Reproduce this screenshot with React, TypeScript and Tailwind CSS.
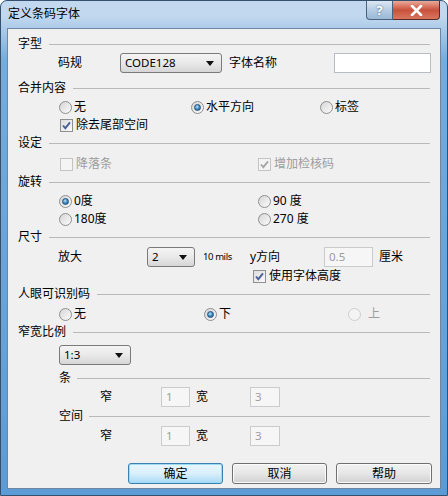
import React, { FC, ReactNode } from 'react';

const Header: FC<{ label: string; mt?: string; sub?: boolean }> = ({ label, mt = '', sub }) => (
  <div className={`flex h-[18px] items-center pr-[10px] ${sub ? 'pl-[51px]' : 'pl-[10px]'} ${mt}`}>
    <span>{label}</span>
    <div className={`h-px flex-1 bg-[#b9b9b9] ${sub ? 'ml-[6px]' : 'ml-[7px]'}`} />
  </div>
);

const Radio: FC<{ label: string; checked?: boolean; disabled?: boolean; width?: string; gap?: string }> = ({
  label,
  checked,
  disabled,
  width = '',
  gap = 'ml-[2px]',
}) => (
  <div className={`flex items-center ${width}`}>
    <span
      className={`flex h-[13px] w-[13px] items-center justify-center rounded-full border ${
        disabled
          ? 'border-[#cfcfcf] bg-[#f4f4f4]'
          : 'border-[#8f8f8f] bg-gradient-to-br from-[#d6d6d6] to-[#fbfbfb]'
      }`}
    >
      {checked && (
        <span className="h-[7px] w-[7px] rounded-full border border-[#1f4f78] bg-[radial-gradient(circle_at_40%_35%,#b6e2fb,#3a86c0_55%,#1d5687)]" />
      )}
    </span>
    <span className={`${gap} ${disabled ? 'text-[#9d9d9d]' : ''}`}>{label}</span>
  </div>
);

const Check: FC<{ label: string; checked?: boolean; disabled?: boolean; width?: string }> = ({
  label,
  checked,
  disabled,
  width = '',
}) => (
  <div className={`flex items-center ${width}`}>
    <span
      className={`flex h-[13px] w-[13px] items-center justify-center border ${
        disabled
          ? 'border-[#c4c4c4] bg-[#f4f4f4]'
          : 'border-[#8f8f8f] bg-gradient-to-br from-[#dcdcdc] to-[#fbfbfb]'
      }`}
    >
      {checked && (
        <svg width="11" height="11" viewBox="0 0 11 11">
          <path
            d="M2 5.5 L4.3 8.2 L9 2.3"
            fill="none"
            stroke={disabled ? '#a8a8a8' : '#4b5f96'}
            strokeWidth="1.9"
          />
        </svg>
      )}
    </span>
    <span className={`ml-[3px] ${disabled ? 'text-[#9d9d9d]' : ''}`}>{label}</span>
  </div>
);

const Combo: FC<{ value: string; width: string }> = ({ value, width }) => (
  <div
    className={`flex h-[20px] items-center justify-between rounded-[3px] border border-[#7a7a7a] bg-gradient-to-b from-[#f4f4f4] via-[#e9e9e9] to-[#d6d6d6] pl-[4px] pr-[7px] text-[11.5px] ${width}`}
  >
    <span>{value}</span>
    <svg width="8" height="5" viewBox="0 0 8 5">
      <path d="M0 0 H8 L4 5 Z" fill="#111" />
    </svg>
  </div>
);

const Field: FC<{ value?: string; width: string; disabled?: boolean }> = ({ value = '', width, disabled }) => (
  <div
    className={`flex h-[20px] items-center border pl-[4px] text-[11.5px] ${width} ${
      disabled ? 'border-[#cbcbcb] bg-[#f6f6f6] text-[#9d9d9d]' : 'border-[#b8bcc4] bg-white'
    }`}
  >
    {value}
  </div>
);

const Button: FC<{ children: ReactNode; primary?: boolean; width: string }> = ({ children, primary, width }) => (
  <div
    className={`flex h-[21px] items-center justify-center rounded-[3px] border ${width} ${
      primary
        ? 'border-[#3c7fb1] bg-gradient-to-b from-[#eaf6fd] via-[#d9f0fc] to-[#a7d9f5] shadow-[inset_0_0_0_1px_#9fdaf7]'
        : 'border-[#707070] bg-gradient-to-b from-[#f2f2f2] via-[#e6e6e6] to-[#d0d0d0] shadow-[inset_0_0_0_1px_#fbfbfb]'
    }`}
  >
    {children}
  </div>
);

const App: FC = () => {
  return (
    <div className="flex h-[496px] w-[448px] flex-col rounded-t-[7px] border border-[#34506e] bg-gradient-to-b from-[#c2d8ee] from-[3%] via-[#74acdd] via-[12%] to-[#5b9cd6] font-['Noto_Sans','Noto_Sans_CJK_SC',sans-serif] text-[12px] leading-[14px] text-black">
      <div className="flex h-[27px] items-start justify-between pr-[7px]">
        <span className="ml-[7px] mt-[6px]">定义条码字体</span>
        <div className="flex">
          <div className="flex h-[19px] w-[27px] items-center justify-center rounded-bl-[4px] border border-t-0 border-[#4a627e] bg-gradient-to-b from-[#dbe7f3] via-[#b6cde4] to-[#9ab8d6] text-[13px] font-bold text-white [text-shadow:0_0_2px_#33506e]">
            ?
          </div>
          <div className="flex h-[19px] w-[47px] items-center justify-center rounded-br-[4px] border border-l-0 border-t-0 border-[#5a2a25] bg-gradient-to-b from-[#e9a999] via-[#c9503b] to-[#d8765f]">
            <svg width="13" height="11" viewBox="0 0 13 11">
              <path d="M2 1 L11 10 M11 1 L2 10" stroke="#fff" strokeWidth="2.6" strokeLinecap="round" />
            </svg>
          </div>
        </div>
      </div>

      <div className="mx-[6px] mb-[6px] flex flex-1 flex-col border border-[#6e86a0] bg-[#f0f0f0] pt-[6px]">
        <Header label="字型" />
        <div className="mt-[1px] flex h-[18px] items-center pl-[50px] pr-[9px]">
          <span className="w-[62px]">码规</span>
          <Combo value="CODE128" width="w-[102px]" />
          <span className="ml-[7px]">字体名称</span>
          <div className="ml-auto">
            <Field width="w-[97px]" />
          </div>
        </div>

        <Header label="合并内容" mt="mt-[7px]" />
        <div className="mt-[1px] flex h-[18px] items-center pl-[51px]">
          <Radio label="无" width="w-[132px]" />
          <Radio label="水平方向" checked width="w-[129px]" />
          <Radio label="标签" />
        </div>
        <div className="flex h-[18px] items-center pl-[52px]">
          <Check label="除去尾部空间" checked />
        </div>

        <Header label="设定" />
        <div className="mt-[3px] flex h-[18px] items-center pl-[52px]">
          <Check label="降落条" disabled width="w-[198px]" />
          <Check label="增加检核码" checked disabled />
        </div>

        <Header label="旋转" />
        <div className="mt-[1px] flex h-[18px] items-center pl-[51px]">
          <Radio label="0度" checked width="w-[199px]" />
          <Radio label="90 度" />
        </div>
        <div className="flex h-[18px] items-center pl-[51px]">
          <Radio label="180度" width="w-[199px]" />
          <Radio label="270 度" />
        </div>

        <Header label="尺寸" />
        <div className="mt-[2px] flex h-[18px] items-center pl-[50px]">
          <span className="w-[89px]">放大</span>
          <Combo value="2" width="w-[48px]" />
          <span className="ml-[8px] w-[47px] text-[9.5px] tracking-[-0.4px]">10 mils</span>
          <span className="w-[74px]">y方向</span>
          <Field value="0.5" width="w-[49px]" disabled />
          <span className="ml-[6px]">厘米</span>
        </div>
        <div className="mt-[1px] flex h-[18px] items-center pl-[245px]">
          <Check label="使用字体高度" checked />
        </div>

        <Header label="人眼可识别码" />
        <div className="mt-[2px] flex h-[18px] items-center pl-[51px]">
          <Radio label="无" width="w-[145px]" />
          <Radio label="下" checked width="w-[144px]" />
          <Radio label="上" disabled gap="ml-[7px]" />
        </div>

        <Header label="窄宽比例" />
        <div className="mt-[5px] flex h-[18px] items-center pl-[51px]">
          <Combo value="1:3" width="w-[72px]" />
        </div>

        <Header label="条" sub mt="mt-[5px]" />
        <div className="mt-[1px] flex h-[18px] items-center pl-[92px]">
          <span className="w-[61px]">窄</span>
          <Field value="1" width="w-[29px]" disabled />
          <span className="ml-[6px] w-[54px]">宽</span>
          <Field value="3" width="w-[30px]" disabled />
        </div>

        <Header label="空间" sub mt="mt-[1px]" />
        <div className="mt-[2px] flex h-[18px] items-center pl-[92px]">
          <span className="w-[61px]">窄</span>
          <Field value="1" width="w-[29px]" disabled />
          <span className="ml-[6px] w-[54px]">宽</span>
          <Field value="3" width="w-[30px]" disabled />
        </div>

        <div className="mt-[18px] flex gap-[9px] pl-[120px]">
          <Button primary width="w-[95px]">确定</Button>
          <Button width="w-[95px]">取消</Button>
          <Button width="w-[96px]">帮助</Button>
        </div>
      </div>
    </div>
  );
};

export default App;
